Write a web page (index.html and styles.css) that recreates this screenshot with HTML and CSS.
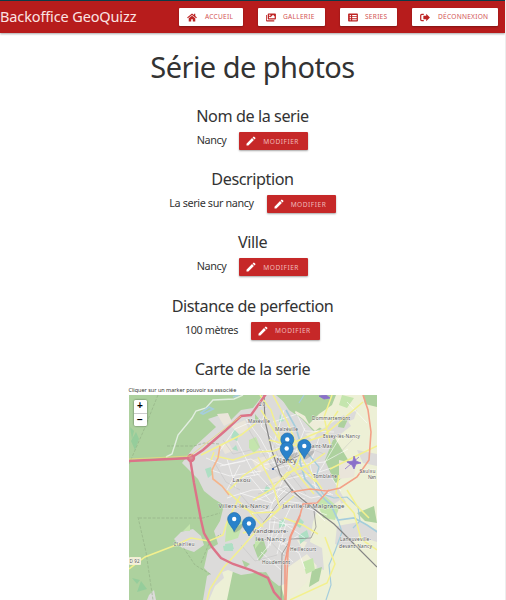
FILE: index.html
```html
<!DOCTYPE html>
<html lang="fr">
<head>
<meta charset="utf-8">
<title>Backoffice GeoQuizz</title>
<link rel="stylesheet" href="styles.css">
</head>
<body>
<svg class="defs" aria-hidden="true">
  <symbol id="pencil" viewBox="0 0 24 24"><path d="M3 17.25V21h3.75L17.81 9.94l-3.75-3.75zM20.71 7.04a1 1 0 0 0 0-1.41l-2.34-2.34a1 1 0 0 0-1.41 0l-1.83 1.83 3.75 3.75z"/></symbol>
</svg>
<header class="bar">
  <a class="brand">Backoffice GeoQuizz</a>
  <nav class="nav">
    <a class="btn home"><svg viewBox="0 0 24 22"><path d="M12 1 0 11l1.8 2L12 4.6 22.2 13l1.8-2-4-3.4V2h-3v3.1zM12 6.5 4 13v8h6v-6h4v6h6v-8z"/></svg><span>ACCUEIL</span></a>
    <a class="btn gallery"><svg viewBox="0 0 24 22"><path fill-rule="evenodd" d="M6 1h16a2 2 0 0 1 2 2v11a2 2 0 0 1-2 2H6a2 2 0 0 1-2-2V3a2 2 0 0 1 2-2zm1 12h14V8.500l-4-4-6 6-2-2-2 2zM9 3.500a2 2 0 1 0 0 4 2 2 0 0 0 0-4zM0 5h2v13h18v3H2a2 2 0 0 1-2-2z"/></svg><span>GALLERIE</span></a>
    <a class="btn series"><svg viewBox="0 0 24 22"><path fill-rule="evenodd" d="M2 1h20a2 2 0 0 1 2 2v16a2 2 0 0 1-2 2H2a2 2 0 0 1-2-2V3a2 2 0 0 1 2-2zm2 4v3h3V5zm6 0v3h11V5zm-6 5v3h3v-3zm6 0v3h11v-3zm-6 5v3h3v-3zm6 0v3h11v-3z"/></svg><span>SERIES</span></a>
    <a class="btn logout"><svg viewBox="0 0 24 22"><path d="M9 2H4a4 4 0 0 0-4 4v10a4 4 0 0 0 4 4h5v-3H4a1 1 0 0 1-1-1V6a1 1 0 0 1 1-1h5zM15 2v5H8v8h7v5l9-9z"/></svg><span>DÉCONNEXION</span></a>
  </nav>
</header>
<main class="page">
  <h1>Série de photos</h1>
  <section class="field name">
    <h2>Nom de la serie</h2>
    <div class="row"><span class="value">Nancy</span><button class="edit"><svg><use href="#pencil"/></svg><span>MODIFIER</span></button></div>
  </section>
  <section class="field description">
    <h2>Description</h2>
    <div class="row"><span class="value">La serie sur nancy</span><button class="edit"><svg><use href="#pencil"/></svg><span>MODIFIER</span></button></div>
  </section>
  <section class="field city">
    <h2>Ville</h2>
    <div class="row"><span class="value">Nancy</span><button class="edit"><svg><use href="#pencil"/></svg><span>MODIFIER</span></button></div>
  </section>
  <section class="field distance">
    <h2>Distance de perfection</h2>
    <div class="row"><span class="value">100 mètres</span><button class="edit"><svg><use href="#pencil"/></svg><span>MODIFIER</span></button></div>
  </section>
  <section class="map-section">
    <h2>Carte de la serie</h2>
    <p class="hint">Cliquer sur un marker pouvoir sa associée</p>
    <div class="map">
      <svg class="tiles" viewBox="128 395 248 205">
        <rect x="128" y="395" width="248" height="205" fill="#add19e"/>
        <!-- open fields -->
        <path fill="#edf0d6" d="M316 395h60v205h-92l-8-28 26-60 50-44-18-30-26-18zM203 600l5-18 12-15 12 4-6 29zM262 395l-8 16 8 14 12-10 8-20z"/>
        <!-- built-up areas -->
        <g fill="#dcdbda">
          <path d="M262 395h16l10 15 13 9 12 13 10-4 20-13 7 11-18 14-8 20 9 21 12 21-13 4-12-5-8 21-3 20 12 6 2 22-15-5-6 13-24 8-18-14-20 3-13-5-16 6-8-8 4-18 10-6-4-13 6-10 4-16-10-6-10-8-6-12-8-8-8-8 12-16 22-20-8-8 12-4 9 7 12-12 12-2z"/>
          <path d="M336 526l22-4 18 8v12l-18-6-10 12-14-4zM356 450l20 4v12l-14-3z"/>
          <path d="M173 539l7-7 12-3 8 7 3 9-10 7-12-4zM206 576l14-8 3 10-9 8-6 14h-6zM148 595l5-5 2 10h-9zM344 416l12-6-3 9-9 4z"/>
        </g>
        <g fill="#eeedd9">
          <path d="M296 404l18 10 12 8-12 9-12-12-8-6zM304 434l14-4-6 10zM286 568l20-14 10 12-12 18-18 16zM327 508l12-8 4 12-9 6zM296 540l10 2-4 8z"/>
        </g>
        <g fill="#add19e">
          <path d="M275 395h60l-4 10-13 9-10 10-4-8-11-6-10-8z"/>
          <path d="M339 418l8 1-4 9-6-1zM362 395h14v12l-12-3zM250 574l15-2 8 12 6 16h-29zM252 545l10-7 4 13-8 10zM311 570l10-3-3 14-10 6zM356 513l17-7 3 17-12-2zM254 414l4 5-4 4zM241 560l8 4-5 4z"/>
        </g>
        <g fill="#c4e5ad">
          <path d="M226 520l12-5 4 8-5 15-13 4zM316 502l8-6 14 12-4 12-12-2zM182 531l7-7v7zM248 440l7-3 4 10-6 6-5-5zM341 395l12 3-7 10-8-3zM302 562l10-4 2 12-9 4zM254 537l6 4-6 8z"/>
          <path fill="#aedfc4" d="M233 429l5 5-2 7-6-3zM204 469l6-2 2 7-5 4zM224 544l7-1 2 6-8 2zM222 546l10-2v7h-9zM278 522l5-3 1 7-6 2zM298 517l5 5-4 6-6-4zM298 535l8-5 2 7-9 7zM265 486l4 2-2 6-4-3zM279 414l4 7-5 1zM231 449l4-4 2 6z"/>
        </g>
        <g fill="#eae5da"><path d="M216 414l11-1 4 9-8 4zM251 460l14-4 5 11-12 6zM338 460l17 4-2 13-15 2zM219 445l9-2 4 8-8 3zM230 426l14-6 4 10-10 4zM268 480l10-4 4 8-9 5z"/></g>
        <!-- paths through the forest -->
        <path d="M157 395l-15 37-14 32M137 517l8 35 7 48M138 518h64l17-5M180 544l14 21 17 10M200 563l9-22 11-7M166 446h27l10-3 16 1" fill="none" stroke="#91ad83" stroke-width=".6" stroke-dasharray="3 1.500"/>
        <path d="M130 441l5-9 3 7-4 11zM129 427l4 4-2 8zM131 578l5 6 3-4M136 592l4-11 6 8" fill="#85c99a" opacity=".6"/>
        <path d="M165 457l6-3 6-19 14-17 4-7 10-3 7-8 21-1 9-4" fill="none" stroke="#e2eee0" stroke-width="1.400"/>
        <!-- streets -->
        <g fill="none" stroke="#fff" stroke-width=".7" opacity=".85">
          <path d="M218 452l16-23 16-7M205 458l18 7 27-6 18 11M210 470l19 6 31-5M226 498l25-8 24-1M239 465l-13 25M245 419l14 19 16 29 22 27 27 27M265 408l-5 18 16 18 21 8M272 422l24-8 8 17 29 1M258 449l39 16 26-3 24-13M283 410l-16 52M304 428l-12 31-22 47-3 42M254 501l31-15 25 12 20-4M239 493l32 10 14-14M249 514l24-5 16-17M260 527l-19 20M290 506l-13 28-21 26M272 538l26 15 6 16M260 552l20 18M268 513l36 25M318 438l-9 27 6 24M301 478l29-10M339 437l-21 35M346 402l20 21"/>
          <path d="M226 459l9 29M236 441l18 35M219 466l25-5M234 479l25-5M249 477l23 27M253 470l26 28M259 453l28-8M263 465l31-8M273 469l31-8M285 479l25-5M276 489l28 10M282 501l26 3M263 521l29 4M274 519l-5 27M285 524l-9 30M280 545l17-9M292 562l-15-14M306 508l20 7M311 484l21 11M328 474l12 17"/>
        </g>
        <g fill="none" stroke="#bbb" stroke-width=".4">
          <path d="M248 430l18 30 26 32M270 438l9 23 26 33M257 494l23-7 27 19M240 495l23 27 19-3M278 456l23-11 22 9M265 486l38-14 19 6M267 539l16 17 7-17M332 460l20-21M213 462l12 20 14 8M222 440l10 14 18-4M240 545l14 16 22-6M246 524l16 22"/>
        </g>
        <!-- waterways -->
        <g fill="none" stroke="#a5cddc" stroke-width="1.700">
          <path d="M285 410l10 18 5 17-1 17 5 17 15 16 11 10 7 15 16-2 13 7 15 10"/>
          <path stroke-width="1.200" d="M296 440l13 16 9 11-4 14 8 13 11 4 13-1 11 10 2 14-7 7M336 517l5 15-7 19-6 14 2 20-5 15M303 395l-5 8"/>
          <path d="M200 413l8-6 4 2-10 5zM232 397l6-2"/>
        </g>
        <!-- railways -->
        <g fill="none" stroke="#858585" stroke-width="1.200">
          <path d="M263 395l1 26 7 30 8 23 11 15 6 6 17 14 20 15 16 16 27 27"/>
          <path stroke-width=".7" d="M313 511l2 16-5 11-20 1-9 15-1 46M272 468l31-15M262 523l17-22 13-12"/>
        </g>
        <!-- secondary roads -->
        <g fill="none" stroke="#f3f08e" stroke-width="1.500">
          <path d="M128 569l16-12 31-12 15-7 18 3 14-6 4-13 5-10 8-16M223 567l-14 22-3 11M200 455l14-7 26-13 15-12M214 456l18 4 24-8 17-1 21-9 31-13 12-18M229 489l13-13 19-13 14-8M259 395l11 15 7 21 8 29 28 34M272 395l15 28 15 38 19 28M252 500l19-11 15-16 20-7 18-13M239 506l14 7 21-1 19-16M260 410l31 50 24 22M331 395l-8 22 6 27M257 457l15 28 7 24M242 533l15-5 22-19M329 469l22-11 25-12M338 475l-3 18 18 20 7 26 16 11"/>
          <path d="M289 600l37-17 8-19-10-27M346 490l10 16 12 12M283 518l19 7 15 9M282 480l13-13 8-22M223 567l20-22 12-14M226 491l22 20 14 16M268 440l24 6 30-10 40-34M213 452l-3 8"/>
        </g>
        <!-- trunk roads -->
        <g fill="none" stroke="#f5b58b" stroke-width="1.600">
          <path d="M219 446l-2 12-6 12 1 9 9 7 7 9"/>
          <path stroke="#f3a087" d="M290 492l19-3 17 2 13-3 17-11 12-17 2-28-3-22-5-15M328 490l-12 13-14 1-4 15-8 17-3 16-2 48"/>
          <path stroke="#f29882" d="M299 515l-10 22-5 25v38"/>
        </g>
        <!-- motorways -->
        <g fill="none" stroke="#dc7388" stroke-width="2.400">
          <path d="M128 461l62-3 12-8 23-20 15-14 10-1 10-14 5-7"/>
          <path d="M189 458l4 25 7 37 3 13 8 14 9 11 12 6 18 6 17 8 6 14 7 8"/>
          <circle cx="190" cy="458" r="3" fill="#d88c96"/>
        </g>
        <path d="M128 459l61-3 33-26 18-14" fill="none" stroke="#eadb7d" stroke-width=".8"/>
        <g stroke="#8a70ca" fill="#8a70ca" stroke-width=".8"><path d="M346 462l6-1 1-5 2 5 5 2-5 1-2 5-2-4zM318 396l7-1 4 3-6 1z"/><path d="M344 469l14-12"/></g>
        <circle cx="272" cy="469" r="1.100" fill="#2954a5"/>
        <g class="road-label"><rect x="128" y="557" width="12" height="8" rx="1" fill="#f2efd4"/><text x="128.500" y="563" textLength="10">D 92</text><text x="258" y="406" fill="#c64355" textLength="6">20</text></g>
        <g class="place">
          <text x="247" y="423" textLength="22">Maxéville</text>
          <text x="274" y="431" textLength="23">Malzéville</text>
          <text x="311" y="420" textLength="38">Dommartemont</text>
          <text x="322" y="437.500" textLength="37">Essey-lès-Nancy</text>
          <text x="308" y="448" textLength="23">Saint-Max</text>
          <text x="312" y="478" textLength="24">Tomblaine</text>
          <text x="358.500" y="473" textLength="16">Saulxu</text>
          <text x="367" y="479" textLength="8">Nan</text>
          <text x="172.500" y="546" textLength="21">Clairlieu</text>
          <text x="289" y="551" textLength="26">Heillecourt</text>
          <text x="261" y="564" textLength="28">Houdemont</text>
          <text x="339" y="541" textLength="31">Laneuveville-</text>
          <text x="338" y="547.500" textLength="33">devant-Nancy</text>
        </g>
        <g class="town">
          <text x="231.500" y="482" textLength="18">Laxou</text>
          <text x="217.500" y="508" textLength="50">Villers-lès-Nancy</text>
          <text x="281.500" y="508" textLength="62">Jarville-la-Malgrange</text>
          <text x="251.500" y="533" textLength="36">Vandœuvre-</text>
          <text x="254.500" y="541" textLength="30">lès-Nancy</text>
          <text class="capital" x="275.500" y="463" textLength="20">Nancy</text>
        </g>
        <defs><g id="pin"><path d="M0 0C-1.500-4-6.500-8-6.500-12.500a6.500 6.500 0 0 1 13 0C6.500-8 1.500-4 0 0z" fill="#2a82cb" stroke="#226da9" stroke-width=".7"/><circle cy="-12.500" r="2.200" fill="#fff"/></g></defs>
        <g fill="#555" opacity=".25"><ellipse cx="291" cy="457" rx="7" ry="2" transform="rotate(-38 291 457)"/><ellipse cx="308" cy="455" rx="7" ry="2" transform="rotate(-38 308 455)"/><ellipse cx="238" cy="528" rx="7" ry="2" transform="rotate(-38 238 528)"/></g>
        <use href="#pin" x="286.300" y="452"/><use href="#pin" x="285.700" y="461"/><use href="#pin" x="303.300" y="458.500"/>
        <use href="#pin" x="233.200" y="531.500"/><use href="#pin" x="248" y="536"/>
      </svg>
      <div class="zoom"><button>+</button><button>−</button></div>
    </div>
  </section>
</main>
</body>
</html>
```

FILE: styles.css
```css
* { box-sizing: border-box; }
body {
  margin: 0;
  height: 600px;
  overflow: hidden;
  background: #fff;
  color: #333;
  font-family: "Noto Sans", "Open Sans", sans-serif;
  border-right: 1px solid #ededed;
}
.defs { display: none; }
.bar {
  height: 33px;
  display: flex;
  align-items: center;
  justify-content: space-between;
  padding-right: 7px;
  background: #b71c1c;
  border-top: 1px solid #0b3b46;
  box-shadow: 0 1px 2px rgba(0, 0, 0, .35);
}
.brand { color: #fbe3e3; font-size: 14.5px; line-height: 20px; margin-top: -2px; letter-spacing: -.13px; white-space: nowrap; }
.nav { display: flex; gap: 15px; }
.btn {
  display: flex;
  align-items: center;
  height: 18px;
  padding: 0 8px;
  gap: 8px;
  border-radius: 1px;
  background: #fff;
  color: #d35454;
  font-size: 6.6px;
  letter-spacing: .25px;
  white-space: nowrap;
  box-shadow: 0 1px 2px rgba(0, 0, 0, .3);
}
.btn span { position: relative; top: -.5px; }
.btn svg { width: 10px; height: 9px; flex: none; fill: #bd2424; }
.home { width: 64px; }
.gallery { width: 67px; }
.series { width: 57px; }
.series, .gallery { gap: 7px; }
.logout { width: 86px; }
.page { text-align: center; }
h1 { margin: 13px 0 0; height: 42px; line-height: 42px; font-size: 29px; font-weight: 400; letter-spacing: -.55px; }
h2 { margin: 0; height: 24px; line-height: 24px; font-size: 16.200px; font-weight: 400; letter-spacing: -.43px; }
.field { height: 63.200px; }
.name { margin-top: 16px; }
.row { display: flex; justify-content: center; align-items: flex-start; gap: 13px; margin-top: 4px; }
.value { font-size: 10.800px; line-height: 15px; letter-spacing: -.38px; }
.edit {
  width: 69px;
  height: 18px;
  display: flex;
  align-items: center;
  gap: 6px;
  padding: 0 6px;
  border: 0;
  border-radius: 1px;
  background: #c62828;
  color: #f0b9b9;
  font: 6.600px "Noto Sans", sans-serif;
  letter-spacing: .5px;
  box-shadow: 0 1px 2px rgba(0, 0, 0, .35);
}
.edit svg { width: 12px; height: 12px; flex: none; fill: #fff; }
.hint { width: 248px; margin: 5px auto 0; height: 9px; line-height: 9px; font-size: 5.500px; text-align: left; white-space: nowrap; letter-spacing: -.02px; }
.map { position: relative; width: 248px; height: 205px; margin: 0 auto; overflow: hidden; }
.tiles { display: block; width: 248px; height: 205px; }
.tiles text { fill: #555; stroke: #fff; stroke-width: .8px; stroke-opacity: .65; paint-order: stroke; }
.place { font-size: 4.800px; }
.town { font-size: 6px; }
.capital { font-size: 7px; }
.road-label { font-size: 4.500px; }
.zoom {
  position: absolute;
  top: 5px;
  left: 5px;
  width: 13px;
  border-radius: 2px;
  overflow: hidden;
  background: #fff;
  box-shadow: 0 0 2px rgba(0, 0, 0, .6);
}
.zoom button {
  display: block;
  width: 13px;
  height: 13px;
  padding: 0;
  border: 0;
  background: #fff;
  color: #000;
  font: bold 10px/12px "Liberation Sans", sans-serif;
}
.zoom button + button { border-top: 1px solid #ccc; }
```
